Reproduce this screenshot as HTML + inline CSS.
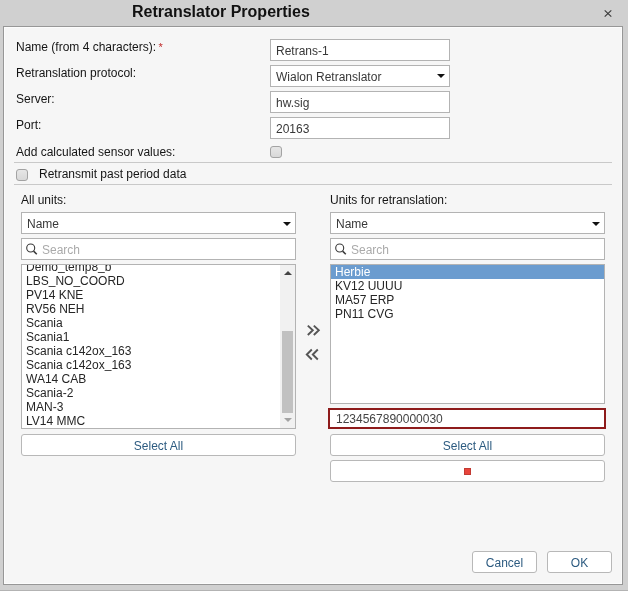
<!DOCTYPE html>
<html><head><meta charset="utf-8">
<style>
*{box-sizing:border-box;margin:0;padding:0}
html,body{width:628px;height:591px;overflow:hidden;background:#d0d0d0;font-family:"Liberation Sans",sans-serif;font-size:12px;color:#333}
.a{position:absolute}
.t{position:absolute;white-space:pre;line-height:14px;font-size:12px}
#dlg{position:absolute;left:3px;top:26px;width:620px;height:559px;border:1px solid #979797;background:#f6f6f6;box-shadow:inset 1px 1px 0 #fcfcfc,inset -1px -1px 0 #fcfcfc}
#bot{position:absolute;left:0;top:590px;width:628px;height:1px;background:#b3b3b3}
.inp{position:absolute;background:#fff;border:1px solid #b3b3b3}
.inp .t{color:#383838}
.btn{position:absolute;background:#fff;border:1px solid #b8b8b8;border-radius:3px;color:#2d5b80;text-align:center}
.sep{position:absolute;height:1px;background:#c9c9c9}
.cb{position:absolute;width:12px;height:12px;border:1px solid #a3a3a3;border-radius:3px;background:linear-gradient(#e6e6e6,#d8d8d8)}
.arr{position:absolute;width:0;height:0;border-left:4px solid transparent;border-right:4px solid transparent;border-top:4px solid #111}
.li{position:absolute;left:4px;white-space:pre;line-height:14px;height:14px;font-size:12px;color:#262626}
.t,.li{will-change:transform}
</style></head><body>
<div class="t" style="left:132px;top:3px;font-size:16px;line-height:18px;font-weight:bold;color:#111">Retranslator Properties</div>
<svg class="a" style="left:603px;top:9px" width="10" height="9" viewBox="0 0 10 9"><path d="M1.7 1.3 L8.3 7.7 M8.3 1.3 L1.7 7.7" stroke="#3a3a3a" stroke-width="1.15"/></svg>
<div id="dlg"></div><div id="bot"></div>

<div class="t" style="left:16px;top:40px;color:#151515">Name (from 4 characters): <span style="color:#c02a2a;font-size:11px;position:relative;left:-1px;top:0px">*</span></div>
<div class="t" style="left:16px;top:66px;color:#151515">Retranslation protocol:</div>
<div class="t" style="left:16px;top:92px;color:#151515">Server:</div>
<div class="t" style="left:16px;top:118px;color:#151515">Port:</div>
<div class="t" style="left:16px;top:145px;color:#151515">Add calculated sensor values:</div>

<div class="inp" style="left:270px;top:39px;width:180px;height:22px"><div class="t" style="left:5px;top:4px">Retrans-1</div></div>
<div class="inp" style="left:270px;top:65px;width:180px;height:22px"><div class="t" style="left:5px;top:4px">Wialon Retranslator</div><div class="arr" style="left:166px;top:8px"></div></div>
<div class="inp" style="left:270px;top:91px;width:180px;height:22px"><div class="t" style="left:5px;top:4px">hw.sig</div></div>
<div class="inp" style="left:270px;top:117px;width:180px;height:22px"><div class="t" style="left:5px;top:4px">20163</div></div>
<div class="cb" style="left:270px;top:146px"></div>

<div class="sep" style="left:14px;top:162px;width:598px"></div>
<div class="cb" style="left:16px;top:169px"></div>
<div class="t" style="left:39px;top:167px;color:#151515">Retransmit past period data</div>
<div class="sep" style="left:14px;top:184px;width:598px"></div>

<!-- left column -->
<div class="t" style="left:21px;top:193px;color:#151515">All units:</div>
<div class="inp" style="left:21px;top:212px;width:275px;height:22px"><div class="t" style="left:5px;top:4px">Name</div><div class="arr" style="left:261px;top:9px"></div></div>
<div class="inp" style="left:21px;top:238px;width:275px;height:22px">
<svg class="a" style="left:4px;top:4px" width="13" height="13" viewBox="0 0 13 13"><circle cx="4.7" cy="5" r="4" fill="none" stroke="#3a3a3a" stroke-width="1.1"/><path d="M7.6 8.1 L10.8 11.3" stroke="#3a3a3a" stroke-width="1.5"/></svg>
<div class="t" style="left:20px;top:4px;color:#aaa">Search</div></div>
<div class="inp" style="left:21px;top:264px;width:275px;height:165px;overflow:hidden">
 <div class="li" style="top:-5px">Demo<span style="position:relative;top:-1px">_</span>temp8<span style="position:relative;top:-1px">_</span>b</div>
 <div class="li" style="top:9px">LBS<span style="position:relative;top:-1px">_</span>NO<span style="position:relative;top:-1px">_</span>COORD</div>
 <div class="li" style="top:23px">PV14 KNE</div>
 <div class="li" style="top:37px">RV56 NEH</div>
 <div class="li" style="top:51px">Scania</div>
 <div class="li" style="top:65px">Scania1</div>
 <div class="li" style="top:79px">Scania c142ox<span style="position:relative;top:-1px">_</span>163</div>
 <div class="li" style="top:93px">Scania c142ox<span style="position:relative;top:-1px">_</span>163</div>
 <div class="li" style="top:107px">WA14 CAB</div>
 <div class="li" style="top:121px">Scania-2</div>
 <div class="li" style="top:135px">MAN-3</div>
 <div class="li" style="top:149px">LV14 MMC</div>
 <div class="a" style="left:258px;top:0;width:15px;height:163px;background:#f1f1f1"></div>
 <div class="a" style="left:260px;top:66px;width:11px;height:82px;background:#c1c1c1"></div>
 <div class="a" style="left:262px;top:6px;width:0;height:0;border-left:4px solid transparent;border-right:4px solid transparent;border-bottom:4px solid #444"></div>
 <div class="a" style="left:262px;top:153px;width:0;height:0;border-left:4px solid transparent;border-right:4px solid transparent;border-top:4px solid #a3a3a3"></div>
</div>
<div class="btn" style="left:21px;top:434px;width:275px;height:22px"><div class="t" style="left:0;right:0;top:4px;text-align:center">Select All</div></div>

<!-- arrows -->
<svg class="a" style="left:305px;top:322px" width="18" height="16" viewBox="0 0 18 16"><path d="M2.8 3.6 L7.8 8.3 L2.8 13 M8.8 3.6 L13.8 8.3 L8.8 13" fill="none" stroke="#555" stroke-width="1.9"/></svg>
<svg class="a" style="left:304px;top:346px" width="18" height="16" viewBox="0 0 18 16"><path d="M7.8 3.5 L2.8 8.5 L7.8 13.5 M13.8 3.5 L8.8 8.5 L13.8 13.5" fill="none" stroke="#555" stroke-width="1.9"/></svg>

<!-- right column -->
<div class="t" style="left:330px;top:193px;color:#151515">Units for retranslation:</div>
<div class="inp" style="left:330px;top:212px;width:275px;height:22px"><div class="t" style="left:5px;top:4px">Name</div><div class="arr" style="left:261px;top:9px"></div></div>
<div class="inp" style="left:330px;top:238px;width:275px;height:22px">
<svg class="a" style="left:4px;top:4px" width="13" height="13" viewBox="0 0 13 13"><circle cx="4.7" cy="5" r="4" fill="none" stroke="#3a3a3a" stroke-width="1.1"/><path d="M7.6 8.1 L10.8 11.3" stroke="#3a3a3a" stroke-width="1.5"/></svg>
<div class="t" style="left:20px;top:4px;color:#aaa">Search</div></div>
<div class="inp" style="left:330px;top:264px;width:275px;height:140px;overflow:hidden">
 <div class="a" style="left:0;top:0;width:273px;height:14px;background:#6b9ccf"></div>
 <div class="li" style="top:0;color:#fff">Herbie</div>
 <div class="li" style="top:14px">KV12 UUUU</div>
 <div class="li" style="top:28px">MA57 ERP</div>
 <div class="li" style="top:42px">PN11 CVG</div>
</div>
<div class="a" style="left:328px;top:408px;width:278px;height:21px;border:2px solid #8e1b1b;background:#fff"><div class="t" style="left:6px;top:2px;color:#444">1234567890000030</div></div>
<div class="btn" style="left:330px;top:434px;width:275px;height:22px"><div class="t" style="left:0;right:0;top:4px;text-align:center">Select All</div></div>
<div class="btn" style="left:330px;top:460px;width:275px;height:22px"><div class="a" style="left:133px;top:7px;width:7px;height:7px;background:#e8443b;border:1px solid #c23a33"></div></div>

<div class="btn" style="left:472px;top:551px;width:65px;height:22px"><div class="t" style="left:0;right:0;top:4px;text-align:center">Cancel</div></div>
<div class="btn" style="left:547px;top:551px;width:65px;height:22px"><div class="t" style="left:0;right:0;top:4px;text-align:center">OK</div></div>
</body></html>
